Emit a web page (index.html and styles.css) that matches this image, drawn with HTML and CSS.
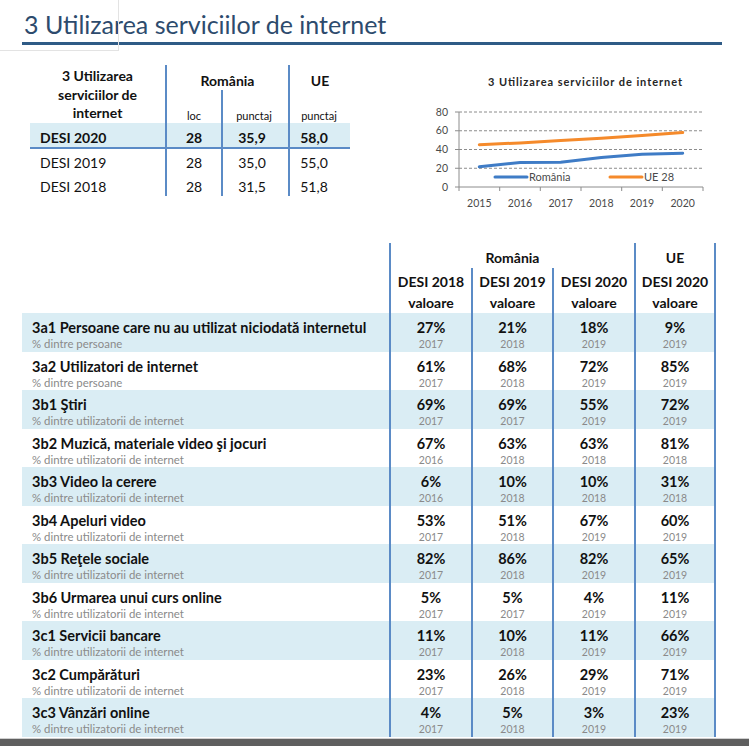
FILE: index.html
```html
<!DOCTYPE html>
<html lang="ro">
<head>
<meta charset="utf-8">
<title>3 Utilizarea serviciilor de internet</title>
<link rel="stylesheet" href="styles.css">
</head>
<body>
<div class="frame-mark"></div>
<div class="page">
  <header class="title-bar"><h1>3 Utilizarea serviciilor de internet</h1></header>

  <section class="top">
    <table class="summary">
      <colgroup><col class="c1"><col class="c2"><col class="c3"><col class="c4"></colgroup>
      <thead>
        <tr class="hr1">
          <th class="corner" rowspan="2">3 Utilizarea<br>serviciilor de<br>internet</th>
          <th class="vl" colspan="2">România</th>
          <th class="vl">UE</th>
        </tr>
        <tr class="hr2">
          <th class="vl">loc</th>
          <th class="vl p1">punctaj</th>
          <th class="vl p2">punctaj</th>
        </tr>
      </thead>
      <tbody>
        <tr class="cur"><td class="lbl">DESI 2020</td><td class="vl">28</td><td class="vl p1">35,9</td><td class="vl p2">58,0</td></tr>
        <tr class="r19"><td class="lbl">DESI 2019</td><td class="vl">28</td><td class="vl p1">35,0</td><td class="vl p2">55,0</td></tr>
        <tr class="r18"><td class="lbl">DESI 2018</td><td class="vl">28</td><td class="vl p1">31,5</td><td class="vl p2">51,8</td></tr>
      </tbody>
    </table>

    <svg class="chart" width="290" height="150" viewBox="425 65 290 150" xmlns="http://www.w3.org/2000/svg">
      <text class="c-title" x="585" y="86" text-anchor="middle" textLength="194">3 Utilizarea serviciilor de internet</text>
      <g class="grid">
        <line x1="459" y1="112" x2="703" y2="112"/>
        <line x1="459" y1="130.75" x2="703" y2="130.75"/>
        <line x1="459" y1="149.5" x2="703" y2="149.5"/>
        <line x1="459" y1="168.25" x2="703" y2="168.25"/>
      </g>
      <g class="axis">
        <line x1="459" y1="187" x2="703" y2="187"/>
        <line x1="459" y1="112" x2="459" y2="187"/>
        <line x1="455" y1="112" x2="459" y2="112"/>
        <line x1="455" y1="130.75" x2="459" y2="130.75"/>
        <line x1="455" y1="149.5" x2="459" y2="149.5"/>
        <line x1="455" y1="168.25" x2="459" y2="168.25"/>
        <line x1="455" y1="187" x2="459" y2="187"/>
        <line x1="459" y1="187" x2="459" y2="191"/>
        <line x1="499.7" y1="187" x2="499.7" y2="191"/>
        <line x1="540.3" y1="187" x2="540.3" y2="191"/>
        <line x1="581" y1="187" x2="581" y2="191"/>
        <line x1="621.7" y1="187" x2="621.7" y2="191"/>
        <line x1="662.3" y1="187" x2="662.3" y2="191"/>
        <line x1="703" y1="187" x2="703" y2="191"/>
      </g>
      <g class="ylab" text-anchor="end">
        <text x="448" y="115.5">80</text>
        <text x="448" y="134.2">60</text>
        <text x="448" y="153">40</text>
        <text x="448" y="171.7">20</text>
        <text x="448" y="190.5">0</text>
      </g>
      <g class="xlab" text-anchor="middle">
        <text x="479.3" y="207">2015</text>
        <text x="520" y="207">2016</text>
        <text x="560.7" y="207">2017</text>
        <text x="601.3" y="207">2018</text>
        <text x="642" y="207">2019</text>
        <text x="682.7" y="207">2020</text>
      </g>
      <polyline class="ue" points="479.3,144.8 520,142.9 560.7,140.6 601.3,138.2 642,135.4 682.7,132.6"/>
      <polyline class="ro" points="479.3,166.8 520,162.5 560.7,162.3 601.3,157.5 642,154.2 682.7,153.3"/>
      <line class="ro" x1="495" y1="177" x2="527" y2="177"/>
      <text class="leg" x="529" y="181">România</text>
      <line class="ue" x1="610" y1="177" x2="642" y2="177"/>
      <text class="leg" x="644" y="181">UE 28</text>
    </svg>
  </section>

  <table class="indicators">
    <colgroup><col class="n"><col class="d"><col class="d2"><col class="d"><col class="d"></colgroup>
    <thead>
      <tr class="ha">
        <th></th>
        <th class="vl" colspan="3">România</th>
        <th class="vl vr">UE</th>
      </tr>
      <tr class="hb">
        <th></th>
        <th class="vl">DESI 2018<br>valoare</th>
        <th class="vl">DESI 2019<br>valoare</th>
        <th class="vl">DESI 2020<br>valoare</th>
        <th class="vl vr">DESI 2020<br>valoare</th>
      </tr>
    </thead>
    <tbody>
      <tr class="alt">
        <td class="name"><div class="v">3a1 Persoane care nu au utilizat niciodată internetul</div><div class="s">% dintre persoane</div></td>
        <td class="vl"><div class="v">27%</div><div class="y">2017</div></td>
        <td class="vl"><div class="v">21%</div><div class="y">2018</div></td>
        <td class="vl"><div class="v">18%</div><div class="y">2019</div></td>
        <td class="vl vr"><div class="v">9%</div><div class="y">2019</div></td>
      </tr>
      <tr>
        <td class="name"><div class="v">3a2 Utilizatori de internet</div><div class="s">% dintre persoane</div></td>
        <td class="vl"><div class="v">61%</div><div class="y">2017</div></td>
        <td class="vl"><div class="v">68%</div><div class="y">2018</div></td>
        <td class="vl"><div class="v">72%</div><div class="y">2019</div></td>
        <td class="vl vr"><div class="v">85%</div><div class="y">2019</div></td>
      </tr>
      <tr class="alt">
        <td class="name"><div class="v">3b1 Ştiri</div><div class="s">% dintre utilizatorii de internet</div></td>
        <td class="vl"><div class="v">69%</div><div class="y">2017</div></td>
        <td class="vl"><div class="v">69%</div><div class="y">2017</div></td>
        <td class="vl"><div class="v">55%</div><div class="y">2019</div></td>
        <td class="vl vr"><div class="v">72%</div><div class="y">2019</div></td>
      </tr>
      <tr>
        <td class="name"><div class="v">3b2 Muzică, materiale video şi jocuri</div><div class="s">% dintre utilizatorii de internet</div></td>
        <td class="vl"><div class="v">67%</div><div class="y">2016</div></td>
        <td class="vl"><div class="v">63%</div><div class="y">2018</div></td>
        <td class="vl"><div class="v">63%</div><div class="y">2018</div></td>
        <td class="vl vr"><div class="v">81%</div><div class="y">2018</div></td>
      </tr>
      <tr class="alt">
        <td class="name"><div class="v">3b3 Video la cerere</div><div class="s">% dintre utilizatorii de internet</div></td>
        <td class="vl"><div class="v">6%</div><div class="y">2016</div></td>
        <td class="vl"><div class="v">10%</div><div class="y">2018</div></td>
        <td class="vl"><div class="v">10%</div><div class="y">2018</div></td>
        <td class="vl vr"><div class="v">31%</div><div class="y">2018</div></td>
      </tr>
      <tr>
        <td class="name"><div class="v">3b4 Apeluri video</div><div class="s">% dintre utilizatorii de internet</div></td>
        <td class="vl"><div class="v">53%</div><div class="y">2017</div></td>
        <td class="vl"><div class="v">51%</div><div class="y">2018</div></td>
        <td class="vl"><div class="v">67%</div><div class="y">2019</div></td>
        <td class="vl vr"><div class="v">60%</div><div class="y">2019</div></td>
      </tr>
      <tr class="alt">
        <td class="name"><div class="v">3b5 Reţele sociale</div><div class="s">% dintre utilizatorii de internet</div></td>
        <td class="vl"><div class="v">82%</div><div class="y">2017</div></td>
        <td class="vl"><div class="v">86%</div><div class="y">2018</div></td>
        <td class="vl"><div class="v">82%</div><div class="y">2019</div></td>
        <td class="vl vr"><div class="v">65%</div><div class="y">2019</div></td>
      </tr>
      <tr>
        <td class="name"><div class="v">3b6 Urmarea unui curs online</div><div class="s">% dintre utilizatorii de internet</div></td>
        <td class="vl"><div class="v">5%</div><div class="y">2017</div></td>
        <td class="vl"><div class="v">5%</div><div class="y">2017</div></td>
        <td class="vl"><div class="v">4%</div><div class="y">2019</div></td>
        <td class="vl vr"><div class="v">11%</div><div class="y">2019</div></td>
      </tr>
      <tr class="alt">
        <td class="name"><div class="v">3c1 Servicii bancare</div><div class="s">% dintre utilizatorii de internet</div></td>
        <td class="vl"><div class="v">11%</div><div class="y">2017</div></td>
        <td class="vl"><div class="v">10%</div><div class="y">2018</div></td>
        <td class="vl"><div class="v">11%</div><div class="y">2019</div></td>
        <td class="vl vr"><div class="v">66%</div><div class="y">2019</div></td>
      </tr>
      <tr>
        <td class="name"><div class="v">3c2 Cumpărături</div><div class="s">% dintre utilizatorii de internet</div></td>
        <td class="vl"><div class="v">23%</div><div class="y">2017</div></td>
        <td class="vl"><div class="v">26%</div><div class="y">2018</div></td>
        <td class="vl"><div class="v">29%</div><div class="y">2019</div></td>
        <td class="vl vr"><div class="v">71%</div><div class="y">2019</div></td>
      </tr>
      <tr class="alt">
        <td class="name"><div class="v">3c3 Vânzări online</div><div class="s">% dintre utilizatorii de internet</div></td>
        <td class="vl"><div class="v">4%</div><div class="y">2017</div></td>
        <td class="vl"><div class="v">5%</div><div class="y">2018</div></td>
        <td class="vl"><div class="v">3%</div><div class="y">2019</div></td>
        <td class="vl vr"><div class="v">23%</div><div class="y">2019</div></td>
      </tr>
    </tbody>
  </table>
</div>
<div class="bottom-bar"></div>
</body>
</html>
```

FILE: styles.css
```css
* { box-sizing: border-box; }

html, body {
  margin: 0;
  padding: 0;
  background: #ffffff;
}

body {
  position: relative;
  width: 749px;
  height: 746px;
  overflow: hidden;
  font-family: Lato, "Open Sans", "DejaVu Sans", sans-serif;
  color: #111111;
}

.frame-mark {
  position: absolute;
  left: 0;
  top: 0;
  width: 119px;
  height: 51px;
  border-right: 1px solid #e3e3e3;
  border-bottom: 1px solid #e3e3e3;
  pointer-events: none;
}

.page {
  padding-left: 22px;
}

/* ---------- title ---------- */
.title-bar {
  width: 700px;
  padding-top: 10px;
  padding-bottom: 4px;
  border-bottom: 3px solid #2f5b86;
}

.title-bar h1 {
  margin: 0;
  padding-left: 2px;
  font-size: 25px;
  line-height: 28px;
  font-weight: 400;
  color: #2d4b6d;
}

/* ---------- top row ---------- */
.top {
  display: flex;
  align-items: flex-start;
  margin-top: 20px;
}

.summary {
  margin-left: 8px;
  width: 320px;
  table-layout: fixed;
  border-collapse: separate;
  border-spacing: 0;
  font-size: 14px;
}

.summary .c1 { width: 135px; }
.summary .c2 { width: 56px; }
.summary .c3 { width: 67px; }
.summary .c4 { width: 62px; }

.summary th,
.summary td {
  padding: 0;
  text-align: center;
}

.summary .vl { border-left: 2px solid #5b8bc6; }

.summary .hr1 th {
  height: 25px;
  vertical-align: bottom;
  padding-bottom: 1px;
  line-height: 16px;
  font-weight: 700;
}

.summary .hr1 th.corner {
  vertical-align: top;
  padding-top: 2px;
  padding-bottom: 0;
  line-height: 18.5px;
}

.summary .hr2 th {
  height: 33px;
  vertical-align: bottom;
  font-size: 11px;
  line-height: 14px;
  font-weight: 400;
}

.summary .hr2 th.p1 { padding-right: 3px; }
.summary .hr2 th.p2 { padding-right: 2px; }

.summary tbody td {
  vertical-align: bottom;
  line-height: 18px;
}

.summary td.p1 { padding-right: 7px; }
.summary td.p2 { padding-right: 12px; }

.summary td.lbl {
  text-align: left;
  padding-left: 10px;
}

.summary .cur td {
  height: 26px;
  background: #daedf4;
  border-bottom: 2px solid #5b8bc6;
  font-weight: 700;
}

.summary .r19 td { height: 23px; }
.summary .r18 td { height: 24px; }

/* ---------- chart ---------- */
.chart {
  display: block;
  margin-left: 75px;
  font-family: Lato, "Open Sans", sans-serif;
}

.chart .c-title {
  font-size: 11px;
  font-weight: 700;
  fill: #262626;
}

.chart .grid line {
  stroke: #8c8c8c;
  stroke-width: 1;
  stroke-dasharray: 3 2;
}

.chart .axis line {
  stroke: #8c8c8c;
  stroke-width: 1;
}

.chart .ylab text,
.chart .xlab text {
  font-size: 10.5px;
  fill: #4a4a4a;
}

.chart .leg {
  font-size: 11px;
  fill: #4a4a4a;
}

.chart .ue {
  fill: none;
  stroke: #f58a2b;
  stroke-width: 3;
  stroke-linecap: round;
}

.chart .ro {
  fill: none;
  stroke: #3f7cc6;
  stroke-width: 3;
  stroke-linecap: round;
}

/* ---------- indicators table ---------- */
.indicators {
  margin-top: 28px;
  width: 694px;
  table-layout: fixed;
  border-collapse: separate;
  border-spacing: 0;
}

.indicators .n { width: 367px; }
.indicators .d { width: 82px; }
.indicators .d2 { width: 81px; }

.indicators th {
  padding: 0;
  text-align: center;
  font-size: 14px;
  font-weight: 700;
  color: #111111;
}

.indicators .vl { border-left: 2px solid #5b8bc6; }
.indicators .vr { border-right: 2px solid #5b8bc6; }

.indicators .ha th {
  height: 25px;
  vertical-align: bottom;
  padding-bottom: 1px;
  line-height: 18px;
}

.indicators .hb th {
  height: 45px;
  vertical-align: top;
  padding-top: 3px;
  line-height: 21px;
}

.indicators td {
  padding: 6px 0 0;
  vertical-align: top;
  text-align: center;
}

.indicators td.name {
  text-align: left;
  padding-left: 10px;
}

.indicators tr.alt td { background: #daedf4; }

.indicators .v {
  font-size: 14.5px;
  font-weight: 700;
  line-height: 18px;
  white-space: nowrap;
}

.indicators .s,
.indicators .y {
  font-size: 11.4px;
  line-height: 14.5px;
  color: #8a8a8a;
}

.indicators .y { font-size: 10.5px; }

/* ---------- screen frame ---------- */
.bottom-bar {
  margin-top: 1px;
  height: 9px;
  border-top: 1px solid #cfcfcf;
  background: #5f5f5f;
}
```
